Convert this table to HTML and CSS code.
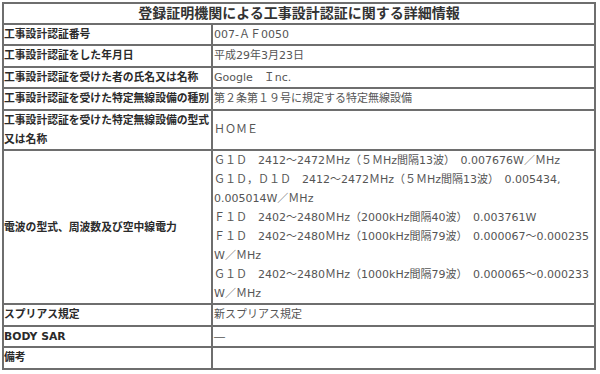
FILE: index.html
```html
<!DOCTYPE html>
<html lang="ja">
<head>
<meta charset="utf-8">
<link rel="stylesheet" href="styles.css">
</head>
<body>
<table class="info">
  <colgroup><col class="c-label"><col class="c-value"></colgroup>
  <tr><th class="title" colspan="2">登録証明機関による工事設計認証に関する詳細情報</th></tr>
  <tr><th>工事設計認証番号</th><td>007-ＡＦ0050</td></tr>
  <tr><th>工事設計認証をした年月日</th><td>平成29年3月23日</td></tr>
  <tr><th>工事設計認証を受けた者の氏名又は名称</th><td>Google　Ｉnc.</td></tr>
  <tr><th>工事設計認証を受けた特定無線設備の種別</th><td>第２条第１９号に規定する特定無線設備</td></tr>
  <tr><th>工事設計認証を受けた特定無線設備の型式又は名称</th><td class="mid">ＨＯＭＥ</td></tr>
  <tr><th class="mid">電波の型式、周波数及び空中線電力</th><td class="lines">
    <span class="ln">Ｇ１Ｄ　2412～2472ＭHz（５ＭHz間隔13波）　0.007676W／ＭHz</span>
    <span class="ln">Ｇ１Ｄ，Ｄ１Ｄ　2412～2472ＭHz（５ＭHz間隔13波）　0.005434,</span>
    <span class="ln">0.005014W／ＭHz</span>
    <span class="ln">Ｆ１Ｄ　2402～2480ＭHz（2000kHz間隔40波）　0.003761W</span>
    <span class="ln">Ｆ１Ｄ　2402～2480ＭHz（1000kHz間隔79波）　0.000067～0.000235</span>
    <span class="ln">W／ＭHz</span>
    <span class="ln">Ｇ１Ｄ　2402～2480ＭHz（1000kHz間隔79波）　0.000065～0.000233</span>
    <span class="ln">W／ＭHz</span>
  </td></tr>
  <tr><th>スプリアス規定</th><td>新スプリアス規定</td></tr>
  <tr><th>BODY SAR</th><td>―</td></tr>
  <tr><th>備考</th><td></td></tr>
</table>
</body>
</html>
```

FILE: styles.css
```css
html, body {
  margin: 0;
  padding: 0;
  background: #fff;
}
body {
  padding: 2px;
  font-family: "DejaVu Sans", "Noto Sans CJK JP", sans-serif;
  font-size: 11px;
}
.info {
  border-collapse: collapse;
  width: 594px;
  table-layout: fixed;
  border: 2px solid #6e6e6e;
}
.c-label { width: 209px; }
.info th, .info td {
  border: 2px solid #6e6e6e;
  padding: 0;
  line-height: 19.4px;
  vertical-align: middle;
  text-align: left;
  overflow: hidden;
}
.info th {
  font-weight: bold;
  font-size: 10.8px;
  color: #2a2a2a;
}
.info td {
  font-weight: normal;
  color: #555;
  white-space: nowrap;
  padding-left: 1px;
}
.info th.title {
  text-align: center;
  font-size: 14px;
  line-height: 19px;
  color: #333;
}
.lines .ln {
  display: block;
  line-height: 19px;
}
```
